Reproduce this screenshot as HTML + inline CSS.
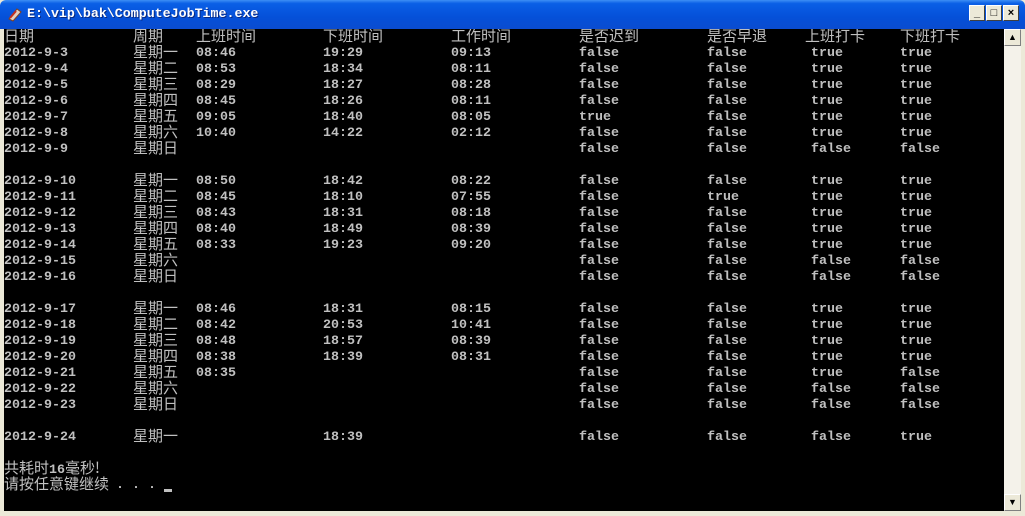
<!DOCTYPE html>
<html><head><meta charset="utf-8"><style>
*{margin:0;padding:0;box-sizing:border-box}
body{width:1025px;height:516px;overflow:hidden;background:#ece9d8;position:relative;font-family:"Liberation Mono",monospace}
#title{position:absolute;left:0;top:0;width:1025px;height:29px;background:linear-gradient(#3d8ff5 0,#0a5fe6 12%,#0550d8 60%,#0a4cd0 100%);border-radius:6px 6px 0 0}
#title .t{position:absolute;left:27px;top:6px;color:#fff;font:bold 13.3px "Liberation Mono",monospace;letter-spacing:0;text-shadow:1px 1px #0a2a80}
.btn{position:absolute;top:5px;width:16px;height:16px;background:#ece9d8;border:1px solid;border-color:#fff #404040 #404040 #fff;font:bold 11px "Liberation Sans",sans-serif;color:#000;text-align:center;line-height:14px}
#con{position:absolute;left:4px;top:29px;width:1000px;height:482px;background:#000;overflow:hidden}
#left{position:absolute;left:0;top:29px;width:4px;height:482px;background:#ece9d8}
#sb{position:absolute;left:1004px;top:29px;width:17px;height:482px;background:#f4f2ea}
.ar{position:absolute;left:0;width:17px;height:17px;background:#ece9d8;border:1px solid;border-color:#fff #808080 #808080 #fff;font:9px "Liberation Sans",sans-serif;text-align:center;line-height:15px}
.r{position:absolute;left:0;height:16px;width:1000px;color:#c0c0c0;font:bold 13.33px/16px "Liberation Mono",monospace;white-space:pre}
.r span{position:absolute;top:0}
.r span.z{top:-2px}
.z{font:15px/16px "Noto Sans CJK SC","WenQuanYi Zen Hei",sans-serif;font-weight:normal}
.a{left:0}.b{left:129px}.c{left:192px}.d{left:319px}.e{left:447px}.f{left:575px}.g{left:703px}.h{left:807px}.i{left:896px}
.hh{left:801px}
.m{font:bold 13.33px/16px "Liberation Mono",monospace}
</style></head><body>
<div id="title"><svg style="position:absolute;left:7px;top:6px" width="16" height="16" viewBox="0 0 16 16"><path d="M2 13 L10 3 L14 6 L6 15Z" fill="#e0d0c0" stroke="#804020"/><path d="M3 12 L9 5" stroke="#c03020" stroke-width="2"/></svg><div class="t">E:\vip\bak\ComputeJobTime.exe</div>
<div class="btn" style="left:969px">_</div><div class="btn" style="left:986px">□</div><div class="btn" style="left:1003px">×</div></div>
<div id="left"></div>
<div id="con">
<div class="r" style="top:1px"><span class="a z">日期</span><span class="b z">周期</span><span class="c z">上班时间</span><span class="d z">下班时间</span><span class="e z">工作时间</span><span class="f z">是否迟到</span><span class="g z">是否早退</span><span class="hh z">上班打卡</span><span class="i z">下班打卡</span></div>
<div class="r" style="top:17px"><span class="a">2012-9-3</span><span class="b z">星期一</span><span class="c">08:46</span><span class="d">19:29</span><span class="e">09:13</span><span class="f">false</span><span class="g">false</span><span class="h">true</span><span class="i">true</span></div>
<div class="r" style="top:33px"><span class="a">2012-9-4</span><span class="b z">星期二</span><span class="c">08:53</span><span class="d">18:34</span><span class="e">08:11</span><span class="f">false</span><span class="g">false</span><span class="h">true</span><span class="i">true</span></div>
<div class="r" style="top:49px"><span class="a">2012-9-5</span><span class="b z">星期三</span><span class="c">08:29</span><span class="d">18:27</span><span class="e">08:28</span><span class="f">false</span><span class="g">false</span><span class="h">true</span><span class="i">true</span></div>
<div class="r" style="top:65px"><span class="a">2012-9-6</span><span class="b z">星期四</span><span class="c">08:45</span><span class="d">18:26</span><span class="e">08:11</span><span class="f">false</span><span class="g">false</span><span class="h">true</span><span class="i">true</span></div>
<div class="r" style="top:81px"><span class="a">2012-9-7</span><span class="b z">星期五</span><span class="c">09:05</span><span class="d">18:40</span><span class="e">08:05</span><span class="f">true</span><span class="g">false</span><span class="h">true</span><span class="i">true</span></div>
<div class="r" style="top:97px"><span class="a">2012-9-8</span><span class="b z">星期六</span><span class="c">10:40</span><span class="d">14:22</span><span class="e">02:12</span><span class="f">false</span><span class="g">false</span><span class="h">true</span><span class="i">true</span></div>
<div class="r" style="top:113px"><span class="a">2012-9-9</span><span class="b z">星期日</span><span class="f">false</span><span class="g">false</span><span class="h">false</span><span class="i">false</span></div>
<div class="r" style="top:145px"><span class="a">2012-9-10</span><span class="b z">星期一</span><span class="c">08:50</span><span class="d">18:42</span><span class="e">08:22</span><span class="f">false</span><span class="g">false</span><span class="h">true</span><span class="i">true</span></div>
<div class="r" style="top:161px"><span class="a">2012-9-11</span><span class="b z">星期二</span><span class="c">08:45</span><span class="d">18:10</span><span class="e">07:55</span><span class="f">false</span><span class="g">true</span><span class="h">true</span><span class="i">true</span></div>
<div class="r" style="top:177px"><span class="a">2012-9-12</span><span class="b z">星期三</span><span class="c">08:43</span><span class="d">18:31</span><span class="e">08:18</span><span class="f">false</span><span class="g">false</span><span class="h">true</span><span class="i">true</span></div>
<div class="r" style="top:193px"><span class="a">2012-9-13</span><span class="b z">星期四</span><span class="c">08:40</span><span class="d">18:49</span><span class="e">08:39</span><span class="f">false</span><span class="g">false</span><span class="h">true</span><span class="i">true</span></div>
<div class="r" style="top:209px"><span class="a">2012-9-14</span><span class="b z">星期五</span><span class="c">08:33</span><span class="d">19:23</span><span class="e">09:20</span><span class="f">false</span><span class="g">false</span><span class="h">true</span><span class="i">true</span></div>
<div class="r" style="top:225px"><span class="a">2012-9-15</span><span class="b z">星期六</span><span class="f">false</span><span class="g">false</span><span class="h">false</span><span class="i">false</span></div>
<div class="r" style="top:241px"><span class="a">2012-9-16</span><span class="b z">星期日</span><span class="f">false</span><span class="g">false</span><span class="h">false</span><span class="i">false</span></div>
<div class="r" style="top:273px"><span class="a">2012-9-17</span><span class="b z">星期一</span><span class="c">08:46</span><span class="d">18:31</span><span class="e">08:15</span><span class="f">false</span><span class="g">false</span><span class="h">true</span><span class="i">true</span></div>
<div class="r" style="top:289px"><span class="a">2012-9-18</span><span class="b z">星期二</span><span class="c">08:42</span><span class="d">20:53</span><span class="e">10:41</span><span class="f">false</span><span class="g">false</span><span class="h">true</span><span class="i">true</span></div>
<div class="r" style="top:305px"><span class="a">2012-9-19</span><span class="b z">星期三</span><span class="c">08:48</span><span class="d">18:57</span><span class="e">08:39</span><span class="f">false</span><span class="g">false</span><span class="h">true</span><span class="i">true</span></div>
<div class="r" style="top:321px"><span class="a">2012-9-20</span><span class="b z">星期四</span><span class="c">08:38</span><span class="d">18:39</span><span class="e">08:31</span><span class="f">false</span><span class="g">false</span><span class="h">true</span><span class="i">true</span></div>
<div class="r" style="top:337px"><span class="a">2012-9-21</span><span class="b z">星期五</span><span class="c">08:35</span><span class="f">false</span><span class="g">false</span><span class="h">true</span><span class="i">false</span></div>
<div class="r" style="top:353px"><span class="a">2012-9-22</span><span class="b z">星期六</span><span class="f">false</span><span class="g">false</span><span class="h">false</span><span class="i">false</span></div>
<div class="r" style="top:369px"><span class="a">2012-9-23</span><span class="b z">星期日</span><span class="f">false</span><span class="g">false</span><span class="h">false</span><span class="i">false</span></div>
<div class="r" style="top:401px"><span class="a">2012-9-24</span><span class="b z">星期一</span><span class="d">18:39</span><span class="f">false</span><span class="g">false</span><span class="h">false</span><span class="i">true</span></div>
<div class="r" style="top:433px"><span class="a z">共耗时<b class="m">16</b>毫秒!</span></div>
<div class="r" style="top:449px"><span class="a z">请按任意键继续</span><span style="left:112px">. . . </span><span style="left:160px;top:11px;width:8px;height:3px;background:#c0c0c0"></span></div>
</div>
<div id="sb"><div class="ar" style="top:0">▲</div><div class="ar" style="bottom:0">▼</div></div>
</body></html>
